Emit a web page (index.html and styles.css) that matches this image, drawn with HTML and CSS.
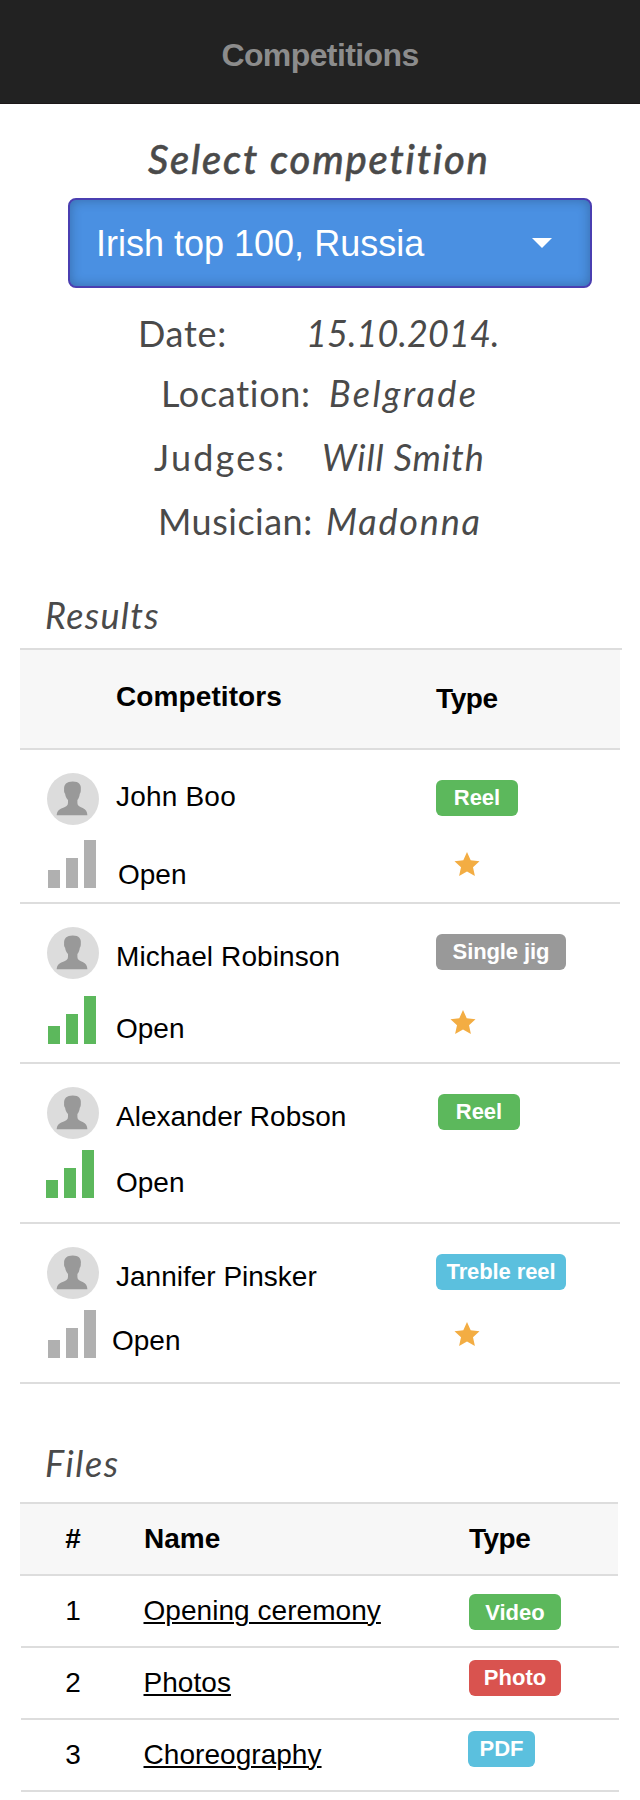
FILE: index.html
```html
<!DOCTYPE html>
<html lang="en">
<head>
<meta charset="utf-8">
<title>Competitions</title>
<link rel="stylesheet" href="styles.css">
</head>
<body>
<svg class="defs" width="0" height="0" aria-hidden="true">
  <symbol id="avatar" viewBox="0 0 52 52">
    <circle cx="26" cy="26" r="26" fill="#dcdcdc"/>
    <path fill="#999" d="M9.700 42.200c.2-3.600 1.800-5.600 6-7.200C19 33.700 21 32.800 21 30v-3c-1.600-1.800-2.500-3.500-2.900-6.300-.8-.9-1.200-2.500-1-4.300C16.800 11.500 19.600 8.500 25.800 8.500S34.500 12 33.800 16.500c.1 1.800-.2 3.400-1 4.300-.4 2.800-1 4.500-2.400 6.200v3c0 2.800 2 3.700 5.300 5 3.200 1.300 4.500 3.600 4.700 7.200z"/>
  </symbol>
  <symbol id="bars" viewBox="0 0 48 48">
    <path fill="currentColor" d="M0 30h12v18H0zM18 18h12v30H18zM36 0h12v48H36z"/>
  </symbol>
  <symbol id="star" viewBox="0 0 26 24">
    <path fill="#f3ad43" d="M13 0l3.700 8.200 8.800 1-6.500 6.100 1.900 8.700-7.900-4.400L5.100 24 7 15.300.5 9.200l8.800-1z"/>
  </symbol>
</svg>
<header class="topbar"><h1 class="topbar-title">Competitions</h1></header>
<main>
  <h2 class="prompt"><span>Select competition</span></h2>
  <button class="select" type="button">
    <span class="select-value">Irish top 100, Russia</span>
    <svg class="caret" width="20" height="10" viewBox="0 0 20 10"><path fill="#fff" d="M0 0h20L10 10z"/></svg>
  </button>
  <dl class="details">
    <div class="detail date"><dt>Date:</dt><dd>15.10.2014.</dd></div>
    <div class="detail location"><dt>Location:</dt><dd>Belgrade</dd></div>
    <div class="detail judges"><dt>Judges:</dt><dd>Will Smith</dd></div>
    <div class="detail musician"><dt>Musician:</dt><dd>Madonna</dd></div>
  </dl>

  <h3 class="section-title results-title">Results</h3>
  <section class="results">
    <div class="results-line"></div>
    <div class="results-head"><span class="head-name">Competitors</span><span class="head-type">Type</span></div>
    <article class="entry entry-1">
      <div class="icons"><svg class="avatar"><use href="#avatar"/></svg><svg class="bars gray"><use href="#bars"/></svg></div>
      <div class="who"><span class="name">John Boo</span><span class="level">Open</span></div>
      <div class="kind"><span class="badge green reel">Reel</span><svg class="star"><use href="#star"/></svg></div>
    </article>
    <article class="entry entry-2">
      <div class="icons"><svg class="avatar"><use href="#avatar"/></svg><svg class="bars lime"><use href="#bars"/></svg></div>
      <div class="who"><span class="name">Michael Robinson</span><span class="level">Open</span></div>
      <div class="kind"><span class="badge silver wide">Single jig</span><svg class="star"><use href="#star"/></svg></div>
    </article>
    <article class="entry entry-3">
      <div class="icons"><svg class="avatar"><use href="#avatar"/></svg><svg class="bars lime"><use href="#bars"/></svg></div>
      <div class="who"><span class="name">Alexander Robson</span><span class="level">Open</span></div>
      <div class="kind"><span class="badge green reel">Reel</span></div>
    </article>
    <article class="entry entry-4">
      <div class="icons"><svg class="avatar"><use href="#avatar"/></svg><svg class="bars gray"><use href="#bars"/></svg></div>
      <div class="who"><span class="name">Jannifer Pinsker</span><span class="level">Open</span></div>
      <div class="kind"><span class="badge blue wide">Treble reel</span><svg class="star"><use href="#star"/></svg></div>
    </article>
  </section>

  <h3 class="section-title files-title">Files</h3>
  <section class="files">
    <div class="file-row file-head"><span class="num">#</span><span class="file-name">Name</span><span class="file-type">Type</span></div>
    <div class="file-row"><span class="num">1</span><a class="file-name" href="#">Opening ceremony</a><span class="badge green video">Video</span></div>
    <div class="file-row"><span class="num">2</span><a class="file-name" href="#">Photos</a><span class="badge red photo">Photo</span></div>
    <div class="file-row"><span class="num">3</span><a class="file-name" href="#">Choreography</a><span class="badge blue pdf">PDF</span></div>
  </section>
</main>
</body>
</html>
```
FILE: styles.css
```css
* { box-sizing: border-box; }
body {
  margin: 0;
  width: 640px;
  height: 1800px;
  overflow: hidden;
  background: #fff;
  color: #000;
  font-family: "Liberation Sans", Arial, sans-serif;
  font-size: 28px;
  line-height: 32px;
}
h1, h2, h3, dl, dd { margin: 0; }
svg { display: block; }
.defs { display: none; }

.topbar {
  height: 104px;
  padding-top: 37px;
  background: #222;
  border-bottom: 1px solid #1c1719;
  text-align: center;
}
.topbar-title {
  font-size: 32px;
  line-height: 36px;
  letter-spacing: -0.6px;
  color: #8c8c8c;
}

.prompt {
  height: 94px;
  padding: 31px 0 0 148px;
  font: italic 500 40px/48px Lato, sans-serif;
  letter-spacing: 1.8px;
  -webkit-text-stroke: 0.5px #4a4a4a;
  color: #4a4a4a;
  white-space: nowrap;
}
.select {
  display: flex;
  align-items: flex-start;
  justify-content: space-between;
  width: 524px;
  height: 90px;
  margin: 0 0 0 68px;
  padding: 22px 38px 0 26px;
  border: 2px solid #4a3fb1;
  border-radius: 8px;
  background: #4a90e2;
  box-shadow: inset 0 0 12px rgba(0, 0, 0, 0.25);
  color: #fff;
  font: 36px/44px "Liberation Sans", Arial, sans-serif;
}
.caret { margin-top: 16px; }

.details {
  padding-top: 23px;
  color: #4a4a4a;
  font: 36px/44px Lato, sans-serif;
}
.detail { display: flex; white-space: nowrap; }
.detail dd { font-style: italic; }
.date { padding-left: 138px; }
.date dt { width: 168px; letter-spacing: 0.7px; }
.date dd { letter-spacing: 0.1px; }
.location { margin-top: 16px; padding-left: 161px; }
.location dt { width: 168px; letter-spacing: 0.7px; }
.location dd { letter-spacing: 2.4px; }
.judges { margin-top: 20px; padding-left: 154px; }
.judges dt { width: 168px; letter-spacing: 2.2px; }
.judges dd { letter-spacing: 0.9px; }
.musician { margin-top: 20px; padding-left: 158px; }
.musician dt { width: 168px; letter-spacing: 0.5px; }
.musician dd { letter-spacing: 1.8px; }

.section-title {
  padding-left: 45px;
  color: #4a4a4a;
  font: italic 400 36px/44px Lato, sans-serif;
}
.results-title { margin-top: 50px; height: 55px; letter-spacing: 1.3px; }
.files-title { margin-top: 57px; height: 61px; letter-spacing: 1.6px; }

.results { width: 602px; margin-left: 20px; }
.results-line { height: 2px; background: #ddd; }
.results-head {
  display: flex;
  width: 600px;
  height: 100px;
  padding: 31px 0 0 96px;
  background: #f7f7f7;
  border-bottom: 2px solid #ddd;
  font-weight: bold;
}
.head-name { width: 320px; letter-spacing: 0.1px; }
.head-type { padding-top: 2px; letter-spacing: -0.4px; }
.entry {
  display: grid;
  grid-template-columns: 69px 320px 1fr;
  width: 600px;
  height: 160px;
  padding: 23px 0 0 27px;
  border-bottom: 2px solid #ddd;
}
.icons, .who, .kind { display: flex; flex-direction: column; align-items: flex-start; }
.avatar { width: 52px; height: 52px; }
.bars { width: 48px; height: 48px; margin-left: 1px; }
.gray { color: #b0b0b0; }
.lime { color: #5cb85c; }
.who { padding-top: 14px; white-space: nowrap; }
.kind { padding-top: 7px; }
.star { width: 26px; height: 24px; }

.entry-1 { height: 154px; }
.entry-1 .bars { margin-top: 15px; }
.entry-1 .who { padding-top: 8px; }
.entry-1 .name { letter-spacing: 0.2px; }
.entry-1 .level { margin: 46px 0 0 2px; }
.entry-1 .star { margin: 36px 0 0 18px; }
.entry-2 .bars { margin-top: 17px; }
.entry-2 .name { letter-spacing: 0.1px; }
.entry-2 .level { margin-top: 40px; }
.entry-2 .star { margin: 40px 0 0 14px; }
.entry-3 .bars { margin: 11px 0 0 -1px; }
.entry-3 .level { margin-top: 34px; }
.entry-3 .badge { margin-left: 2px; }
.entry-4 .bars { margin-top: 11px; }
.entry-4 .level { margin: 32px 0 0 -4px; }
.entry-4 .star { margin: 32px 0 0 18px; }

.badge {
  height: 36px;
  border-radius: 6px;
  color: #fff;
  font-size: 22px;
  font-weight: bold;
  line-height: 36px;
  text-align: center;
  white-space: nowrap;
}
.reel { width: 82px; }
.wide { width: 130px; letter-spacing: -0.1px; }
.green { background: #5cb85c; }
.silver { background: #999; }
.blue { background: #5bc0de; }
.red { background: #d9534f; }

.files { width: 599px; margin-left: 20px; }
.file-row {
  display: grid;
  grid-template-columns: 98px 325px auto;
  justify-content: start;
  align-items: start;
  height: 72px;
  margin-left: 1px;
  padding: 19px 0 0 25px;
  border-bottom: 2px solid #ddd;
}
.file-head {
  width: 598px;
  height: 74px;
  margin-left: 0;
  padding-left: 26px;
  border-top: 2px solid #ddd;
  background: #f7f7f7;
  font-weight: bold;
}
.file-type { letter-spacing: -0.5px; }
.num { width: 54px; text-align: center; }
a.file-name {
  justify-self: start;
  margin-left: -0.5px;
  letter-spacing: 0.05px;
  color: #000;
  text-decoration: underline;
  text-decoration-thickness: 2px;
  text-underline-offset: 2px;
}
.video, .photo { width: 92px; }
.video { margin-top: -1px; line-height: 38px; }
.photo { margin-top: -7px; }
.pdf { width: 67px; margin: -8px 0 0 -1px; }
```
